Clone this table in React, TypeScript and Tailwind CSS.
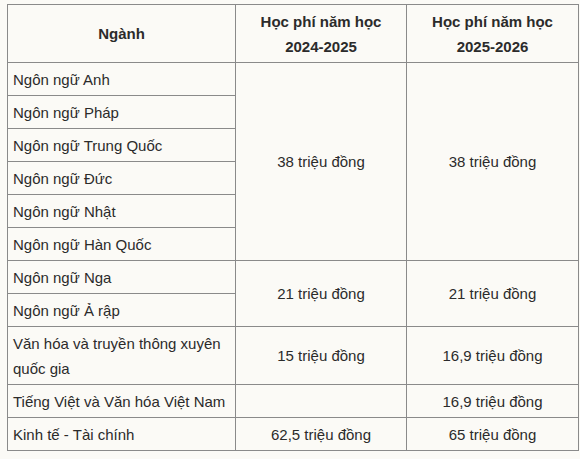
const rows1 = [
  "Ngôn ngữ Anh",
  "Ngôn ngữ Pháp",
  "Ngôn ngữ Trung Quốc",
  "Ngôn ngữ Đức",
  "Ngôn ngữ Nhật",
  "Ngôn ngữ Hàn Quốc",
];

const cell = "border border-[#8a8a8a] px-[5px] align-middle";

export default function App() {
  return (
    <div className="w-[580px] h-[459px] bg-[#fbfaf6] pt-[4px] pl-[7px] text-[15px] text-[#2b2b2b] font-['Liberation_Sans',Arial,sans-serif]">
      <table className="border-collapse w-[571px] table-fixed leading-[25px]">
        <colgroup>
          <col className="w-[228px]" />
          <col className="w-[171px]" />
          <col className="w-[172px]" />
        </colgroup>
        <thead>
          <tr className="h-[58px]">
            <th className={`${cell} text-center font-bold`}>Ngành</th>
            <th className={`${cell} text-center font-bold`}>
              Học phí năm học
              <br />
              2024-2025
            </th>
            <th className={`${cell} text-center font-bold`}>
              Học phí năm học
              <br />
              2025-2026
            </th>
          </tr>
        </thead>
        <tbody>
          {rows1.map((name, i) => (
            <tr key={name} className="h-[33px]">
              <td className={cell}>{name}</td>
              {i === 0 && (
                <>
                  <td rowSpan={6} className={`${cell} text-center`}>
                    38 triệu đồng
                  </td>
                  <td rowSpan={6} className={`${cell} text-center`}>
                    38 triệu đồng
                  </td>
                </>
              )}
            </tr>
          ))}
          <tr className="h-[33px]">
            <td className={cell}>Ngôn ngữ Nga</td>
            <td rowSpan={2} className={`${cell} text-center`}>
              21 triệu đồng
            </td>
            <td rowSpan={2} className={`${cell} text-center`}>
              21 triệu đồng
            </td>
          </tr>
          <tr className="h-[33px]">
            <td className={cell}>Ngôn ngữ Ả rập</td>
          </tr>
          <tr className="h-[58px]">
            <td className={cell}>
              Văn hóa và truyền thông xuyên
              <br />
              quốc gia
            </td>
            <td className={`${cell} text-center`}>15 triệu đồng</td>
            <td className={`${cell} text-center`}>16,9 triệu đồng</td>
          </tr>
          <tr className="h-[33px]">
            <td className={cell}>Tiếng Việt và Văn hóa Việt Nam</td>
            <td className={cell}></td>
            <td className={`${cell} text-center`}>16,9 triệu đồng</td>
          </tr>
          <tr className="h-[33px]">
            <td className={cell}>Kinh tế - Tài chính</td>
            <td className={`${cell} text-center`}>62,5 triệu đồng</td>
            <td className={`${cell} text-center`}>65 triệu đồng</td>
          </tr>
        </tbody>
      </table>
    </div>
  );
}
